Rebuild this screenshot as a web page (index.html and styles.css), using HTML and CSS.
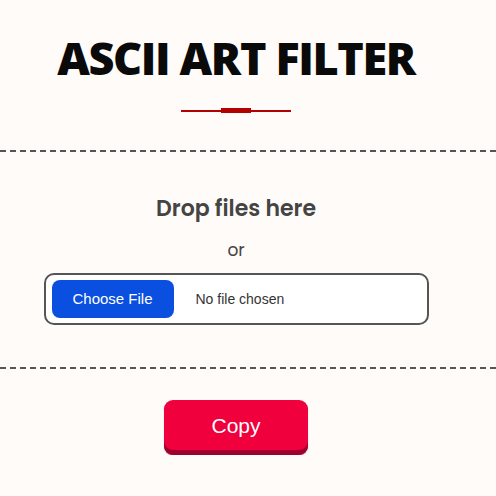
FILE: index.html
```html
<!DOCTYPE html>
<html>
<head>
<meta charset="utf-8">
<link rel="stylesheet" href="styles.css">
</head>
<body>
<header class="header">
  <h1 class="title">ASCII ART FILTER</h1>
  <div class="divider"><span class="divider-block"></span></div>
</header>
<section class="drop">
  <div class="drop-inner">
    <div class="drop-title">Drop files here</div>
    <div class="drop-or">or</div>
    <div class="file-box">
      <span class="file-btn">Choose File</span>
      <span class="file-name">No file chosen</span>
    </div>
  </div>
</section>
<div class="actions">
  <button class="copy-btn">Copy</button>
</div>
</body>
</html>
```
FILE: styles.css
```css
html, body {
  margin: 0;
  padding: 0;
  background: #fffbf8;
}
body {
  width: 496px;
  font-family: "Liberation Sans", Arial, sans-serif;
}
.header {
  width: 472px;
  display: flex;
  flex-direction: column;
  align-items: center;
  padding-top: 32px;
  padding-bottom: 38px;
}
.title {
  margin: 0;
  font-family: "Open Sans", "Liberation Sans", sans-serif;
  font-weight: 800;
  font-size: 45px;
  line-height: 52px;
  color: #0a0a0a;
  letter-spacing: -1.4px;
}
.divider {
  margin-top: 26px;
  width: 110px;
  height: 1.5px;
  background: #b30000;
  display: flex;
  justify-content: center;
  align-items: center;
}
.divider-block {
  width: 30px;
  height: 5px;
  background: #b30000;
}
.drop {
  border-top: 2px dashed #555;
  border-bottom: 2px dashed #555;
}
.drop-inner {
  width: 472px;
  display: flex;
  flex-direction: column;
  align-items: center;
  padding: 42px 0 42px;
}
.drop-title {
  font-family: "Poppins", "Open Sans", sans-serif;
  font-weight: 600;
  font-size: 22px;
  line-height: 30px;
  color: #444;
  letter-spacing: 0;
}
.drop-or {
  margin-top: 16px;
  font-family: "Poppins", "Open Sans", sans-serif;
  font-size: 17px;
  line-height: 20px;
  color: #444;
}
.file-box {
  margin-top: 13px;
  width: 375px;
  height: 48px;
  border: 2px solid #555;
  border-radius: 10px;
  background: #fff;
  display: flex;
  align-items: center;
  padding-left: 6px;
  box-sizing: content-box;
}
.file-btn {
  width: 122px;
  height: 38px;
  border-radius: 8px;
  background: #0a4fe0;
  color: #fff;
  font-size: 15px;
  display: flex;
  align-items: center;
  justify-content: center;
}
.file-name {
  margin-left: 22px;
  font-size: 14px;
  color: #333;
}
.actions {
  width: 472px;
  display: flex;
  justify-content: center;
  padding-top: 31px;
}
.copy-btn {
  width: 144px;
  height: 55px;
  border: none;
  border-radius: 9px;
  background: #f0003c;
  color: #fff;
  font-family: "Liberation Sans", Arial, sans-serif;
  font-size: 21px;
  padding: 0 0 3px;
  box-shadow: inset 0 -5px 0 #9e0030, 0 1px 1px rgba(0,0,0,0.25);
}
```
